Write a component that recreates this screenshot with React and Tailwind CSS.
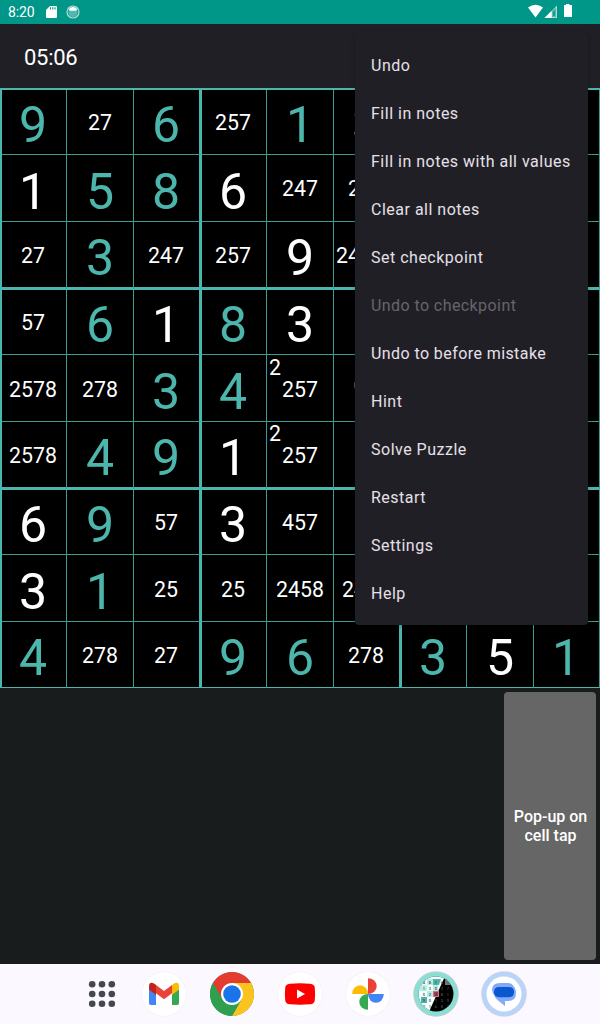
import React from 'react';

// "g" = given digit, "w" = player's digit, "n" = pencil notes, "c" = corner mark
const BOARD = [
  [{ g: 9 }, { n: '27' }, { g: 6 }, { n: '257' }, { g: 1 }, { g: 3 }, {}, {}, {}],
  [{ w: 1 }, { g: 5 }, { g: 8 }, { w: 6 }, { n: '247' }, { n: '247' }, {}, {}, {}],
  [{ n: '27' }, { g: 3 }, { n: '247' }, { n: '257' }, { w: 9 }, { n: '24578' }, {}, {}, {}],
  [{ n: '57' }, { g: 6 }, { w: 1 }, { g: 8 }, { w: 3 }, {}, {}, {}, {}],
  [{ n: '2578' }, { n: '278' }, { g: 3 }, { g: 4 }, { n: '257', c: '2' }, { g: 9 }, {}, {}, {}],
  [{ n: '2578' }, { g: 4 }, { g: 9 }, { w: 1 }, { n: '257', c: '2' }, {}, {}, {}, {}],
  [{ w: 6 }, { g: 9 }, { n: '57' }, { w: 3 }, { n: '457' }, {}, {}, {}, {}],
  [{ w: 3 }, { g: 1 }, { n: '25' }, { n: '25' }, { n: '2458' }, { n: '2478' }, {}, {}, {}],
  [{ g: 4 }, { n: '278' }, { n: '27' }, { g: 9 }, { g: 6 }, { n: '278' }, { g: 3 }, { w: 5 }, { g: 1 }],
];

const MENU = [
  'Undo', 'Fill in notes', 'Fill in notes with all values', 'Clear all notes', 'Set checkpoint',
  'Undo to checkpoint', 'Undo to before mistake', 'Hint', 'Solve Puzzle', 'Restart', 'Settings', 'Help',
];

const rightEdge = (c) => (c === 2 || c === 5 ? 'border-r-[3px] border-r-[#4db6ac]' : 'border-r border-r-[#3c9a90]');
const bottomEdge = (r) => (r === 2 || r === 5 ? 'border-b-[3px] border-b-[#4db6ac]' : r === 8 ? 'border-b border-b-[#4db6ac]' : 'border-b border-b-[#3c9a90]');
const COLUMN_PAD = ['pr-[2px]', 'pr-0', 'pr-px'];
const DIGIT_PAD = ['pt-[6px]', 'pt-[8px]', 'pt-[7px]'];
const NOTE_PAD = ['pt-px', 'pt-[2px]', 'pt-[2px]'];
const LOW_NOTE_PAD = ['pt-[2px]', 'pt-[4px]', 'pt-[3px]'];

function Cell({ cell, r, c }) {
  const digit = cell.g || cell.w;
  const notePad = /8|25/.test(cell.n) ? LOW_NOTE_PAD[r % 3] : NOTE_PAD[r % 3];
  return (
    <div className={`relative flex items-center justify-center whitespace-nowrap bg-black ${COLUMN_PAD[c % 3]} ${rightEdge(c)} ${bottomEdge(r)}`}>
      {digit && (
        <span className={`text-[50px] leading-[58px] ${DIGIT_PAD[r % 3]} ${cell.g ? 'text-[#4db6ac]' : 'text-white'}`}>{digit}</span>
      )}
      {cell.n && <span className={`text-[21.3px] leading-6 text-white ${notePad}`}>{cell.n}</span>}
      {cell.c && (
        <span className={`absolute left-[2px] text-[21.3px] leading-6 text-white ${r % 3 === 2 ? 'top-0' : 'top-px'}`}>{cell.c}</span>
      )}
    </div>
  );
}

function StatusBar() {
  return (
    <div className="flex h-6 items-center bg-[#009688] pl-2 text-white">
      <span className="w-[37px] text-[14px] leading-6 tracking-[-0.1px]">8:20</span>
      <svg width="12" height="12" viewBox="0 0 12 12" className="ml-px">
        <path d="M4 0H10Q11 0 11 1V11Q11 12 10 12H1Q0 12 0 11V4Z" fill="#fff" />
        <path d="M4.5 1.2V3.5M6.8 1.2V3.5M9 1.2V3.5" stroke="#009688" strokeWidth="1.1" />
      </svg>
      <svg width="14" height="14" viewBox="0 0 14 14" className="ml-2">
        <circle cx="7" cy="7" r="6" fill="none" stroke="#b0dfda" strokeWidth="1.2" />
        <circle cx="7" cy="7.5" r="4.6" fill="#52b8ae" />
        <path d="M2.6 4.6Q3.5 2.2 7 1.8Q10.5 2.2 11.4 4.6L10 5.8H4Z" fill="#fff" />
      </svg>
      <svg width="72" height="24" viewBox="0 0 72 24" className="ml-auto">
        <path d="M0 7.5Q7.5 1.8 15 7.5L7.5 17.5Z" fill="#fff" />
        <path d="M29 5.5V18H16.5Z" fill="#a7dbd6" />
        <path d="M23.5 11V18H16.5Z" fill="#fff" />
        <path d="M24 11L28 7.4V17H24Z" fill="#58b9b0" />
        <path d="M25 12L27 9.8V16H25Z" fill="#169d90" />
        <path d="M36 5.5Q36 5 36.5 5H38V4H41.5V5H43.5Q44 5 44 5.5V16.5Q44 17 43.5 17H36.5Q36 17 36 16.5Z" fill="#fff" />
      </svg>
    </div>
  );
}

const Disc = ({ children }) => (
  <svg width="48" height="48" viewBox="-24 -24 48 48" className="shrink-0">
    {children}
  </svg>
);

function AppIcons() {
  const icon = ['48767', '13527', '52481', '90139', '71604', '27318'];
  return (
    <div className="flex h-[60px] items-center gap-5 bg-[#fbf8ff] pl-[78px]">
      <svg width="48" height="48" viewBox="-24 -24 48 48" className="-mr-1.5" fill="#44474f">
        {[-9.8, 0, 9.8].map((y) => [-9.8, 0, 9.8].map((x) => <circle key={`${x}${y}`} cx={x} cy={y} r="3.3" />))}
      </svg>
      <Disc>
        <circle r="22.6" fill="#f2eff6" />
        <circle r="22" fill="#fff" />
        <path d="M-15-5V9Q-15 11-13 11H-8V0Z" fill="#4285f4" />
        <path d="M15-5V9Q15 11 13 11H8V0Z" fill="#34a853" />
        <path d="M8-9L10-10.6Q15-13 15-7.5V-4.5L8 1Z" fill="#fbbc04" />
        <path d="M-8-9L-10-10.6Q-15-13-15-7.5V-4.5L-8 1Z" fill="#c5221f" />
        <path d="M-8-9L0-3L8-9V-.8L0 5.2L-8-.8Z" fill="#ea4335" />
      </Disc>
      <Disc>
        <circle r="22" fill="#2f9e4f" />
        <path d="M-19.05-11A22 22 0 0 1 19.05-11H0L-9.5 5.5Z" fill="#e33b2e" />
        <path d="M19.05-11A22 22 0 0 1 0 22L9.5 5.5L0-11Z" fill="#fcc31e" />
        <path d="M-19.05-11L-9.5 5.5L9.5 5.5L0 22A22 22 0 0 1-19.05-11Z" fill="#2f9e4f" />
        <circle r="11" fill="#fff" />
        <circle r="8.8" fill="#1a73e8" />
      </Disc>
      <Disc>
        <circle r="22.6" fill="#f2eff6" />
        <circle r="22" fill="#fff" />
        <path d="M-10-10.3Q0-11 10-10.3Q14.6-10 14.8-6Q15.4 0 14.8 6Q14.6 10 10 10.3Q0 11-10 10.3Q-14.6 10-14.8 6Q-15.4 0-14.8-6Q-14.6-10-10-10.3Z" fill="#f00" />
        <path d="M-3-4.5L5 0L-3 4.5Z" fill="#fff" />
      </Disc>
      <Disc>
        <circle r="22.6" fill="#f2eff6" />
        <circle r="22" fill="#fff" />
        <path d="M0 0V-15.8A8.3 7.9 0 0 1 0 0Z" fill="#ea4335" transform="scale(1.05 1)" />
        <path d="M0 0H15.8A7.9 8.3 0 0 1 0 0Z" fill="#4285f4" transform="scale(1 1.05)" />
        <path d="M0 0V15.8A8.3 7.9 0 0 1 0 0Z" fill="#34a853" transform="scale(1.05 1)" />
        <path d="M0 0H-15.8A7.9 8.3 0 0 1 0 0Z" fill="#fbbc04" transform="scale(1 1.05)" />
      </Disc>
      <Disc>
        <defs>
          <clipPath id="disc"><circle r="17.5" /></clipPath>
          <clipPath id="lightHalf"><path d="M-20-20H10L-8 20H-20Z" /></clipPath>
          <clipPath id="darkHalf"><path d="M10-20H20V20H-8Z" /></clipPath>
        </defs>
        <circle r="22.8" fill="#c9cdd3" />
        <circle r="22" fill="#8adfd5" />
        <g clipPath="url(#disc)">
          <rect x="-18" y="-18" width="36" height="36" fill="#000" />
          <path d="M-20-20H10L-8 20H-20Z" fill="#f4fffd" />
          <path d="M-17-9H-9V-3H-17ZM-9-3H-3V3H-9ZM-9-15H-3V-9H-9ZM-3-9H2V-3H-3Z" fill="#b5eee7" />
          <path d="M-3-15H5L3-9H-3ZM-15 3H-9V9H-15Z" fill="#4db6ac" />
          <path d="M9-15H16V-9H9Z" fill="#777" />
          <rect x="-2.5" y="-2.5" width="5" height="5" fill="#a33b55" stroke="#e46b84" />
          {['lightHalf', 'darkHalf'].map((half) => (
            <g key={half} clipPath={`url(#${half})`} fill={half === 'lightHalf' ? '#444' : '#555'} fontSize="4" fontWeight="500" fontFamily="Roboto, sans-serif" textAnchor="middle">
              {icon.map((row, y) => row.split('').map((d, x) => (
                <text key={`${x}${y}`} x={-12 + x * 6} y={-10.5 + y * 6}>{d}</text>
              )))}
            </g>
          ))}
        </g>
      </Disc>
      <Disc>
        <circle r="22.8" fill="#d3d1da" />
        <circle r="22" fill="#b9d4fb" />
        <circle r="17.5" fill="#fff" />
        <path d="M-4-11H4Q8-11 9-8.5Q12-6 12-1Q12 7 4 7H1V12L-6 6.5Q-9 4.5-9.5 1.5Q-12-1-12-4Q-12-11-4-11Z" fill="#82aaf8" />
        <path d="M-5-7H5Q10-7 10-2Q10 3.2 5 3.2H-5Q-10 3.2-10-2Q-10-7-5-7Z" fill="#0b57d0" />
      </Disc>
    </div>
  );
}

export default function App() {
  return (
    <div className="relative flex h-[1024px] w-[600px] flex-col overflow-hidden bg-[#191c1c] font-['Roboto',sans-serif]">
      <StatusBar />
      <header className="flex h-16 items-center bg-[#211f26] pl-6 pt-1">
        <span className="text-[22px] leading-7 tracking-[-0.3px] text-white">05:06</span>
      </header>
      <main className="grid h-[600px] shrink-0 grid-cols-[65px_67px_68px_65px_67px_68px_65px_67px_66px] grid-rows-[65px_67px_68px_65px_67px_68px_65px_67px_66px] border-l-2 border-t-2 border-[#4db6ac]">
        {BOARD.map((row, r) => row.map((cell, c) => <Cell key={`${r}-${c}`} cell={cell} r={r} c={c} />))}
      </main>
      <section className="flex flex-1 justify-end p-1">
        <button className="w-[92px] rounded bg-[#666] pl-px text-[16px] font-medium leading-[19px] text-white">
          Pop-up on cell tap
        </button>
      </section>
      <AppIcons />
      <nav className="absolute left-[355px] top-[33px] w-[233px] rounded bg-[#211f26] pb-[7px] pt-[9px] shadow-[0_1px_4px_rgba(0,0,0,0.25)]">
        {MENU.map((label) => (
          <div
            key={label}
            className={`flex h-12 items-center whitespace-nowrap pl-4 text-[16px] ${label.startsWith('Undo to') ? 'tracking-[0.42px]' : 'tracking-[0.5px]'} ${label === 'Undo to checkpoint' ? 'text-[#67656b]' : 'text-[#e6e0e9]'}`}
          >
            {label}
          </div>
        ))}
      </nav>
    </div>
  );
}
